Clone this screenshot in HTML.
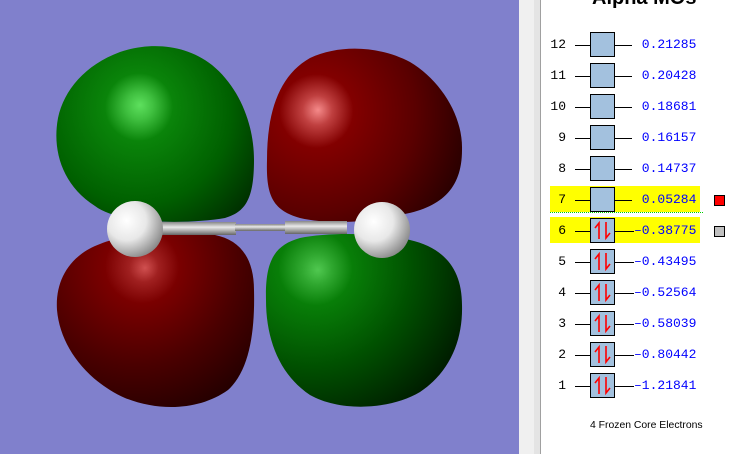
<!DOCTYPE html>
<html><head><style>
body{margin:0;width:756px;height:454px;overflow:hidden;background:#fff;position:relative;font-family:"Liberation Sans",sans-serif}
.ab{position:absolute}
.num{position:absolute;width:30px;text-align:right;font:13px "Liberation Mono",monospace;color:#000}
.val{position:absolute;left:634px;font:13px "Liberation Mono",monospace;color:#0000ff;white-space:pre}
.ln{position:absolute;height:1px;background:#000}
.box{position:absolute;left:590px;width:23px;height:23px;border:1px solid #000;background:#a3c1de}
</style></head><body>
<div class="ab" style="left:0;top:0;width:519px;height:454px;background:#8080cc"></div>
<div class="ab" style="left:519px;top:0;width:15px;height:454px;background:#f0f0f0"></div>
<div class="ab" style="left:534px;top:0;width:6px;height:454px;background:#e4e4e4;border-right:1px solid #a0a0a0"></div>
<svg class="ab" style="left:0;top:0" width="519" height="454" viewBox="0 0 519 454">
<defs>
<radialGradient id="g1" cx="135" cy="115" r="170" fx="140" fy="105" gradientUnits="userSpaceOnUse"><stop offset="0" stop-color="#5ee05e"/><stop offset="0.08" stop-color="#40c040"/><stop offset="0.2" stop-color="#0a840a"/><stop offset="0.55" stop-color="#006000"/><stop offset="1" stop-color="#001500"/></radialGradient>
<radialGradient id="r1" cx="310" cy="115" r="185" fx="318" fy="110" gradientUnits="userSpaceOnUse"><stop offset="0" stop-color="#f58a8a"/><stop offset="0.08" stop-color="#c04040"/><stop offset="0.2" stop-color="#820000"/><stop offset="0.55" stop-color="#5a0000"/><stop offset="1" stop-color="#150000"/></radialGradient>
<radialGradient id="r2" cx="130" cy="260" r="185" fx="145" fy="268" gradientUnits="userSpaceOnUse"><stop offset="0" stop-color="#d05050"/><stop offset="0.08" stop-color="#a02020"/><stop offset="0.2" stop-color="#7a0000"/><stop offset="0.55" stop-color="#4a0000"/><stop offset="1" stop-color="#150000"/></radialGradient>
<radialGradient id="g2" cx="305" cy="262" r="185" fx="318" fy="270" gradientUnits="userSpaceOnUse"><stop offset="0" stop-color="#50c850"/><stop offset="0.08" stop-color="#30a830"/><stop offset="0.2" stop-color="#087e08"/><stop offset="0.55" stop-color="#005000"/><stop offset="1" stop-color="#001500"/></radialGradient>
<radialGradient id="at" cx="0.35" cy="0.35" r="0.7"><stop offset="0" stop-color="#ffffff"/><stop offset="0.5" stop-color="#e8e8e8"/><stop offset="1" stop-color="#8a8a8a"/></radialGradient>
<linearGradient id="bd" x1="0" y1="0" x2="0" y2="1"><stop offset="0" stop-color="#888"/><stop offset="0.4" stop-color="#e8e8e8"/><stop offset="1" stop-color="#666"/></linearGradient>
</defs>
<path d="M95 206 C62 185,52 150,58 118 C64 90,85 65,120 52 C150 42,185 44,212 65 C240 88,254 125,254 160 C254 200,245 212,225 218 C190 224,120 225,95 206Z" fill="url(#g1)"/>
<path d="M300 218 C272 210,266 195,267 160 C267 110,280 75,310 58 C340 44,380 46,410 62 C440 80,463 115,462 150 C462 190,440 208,400 215 C370 222,330 225,300 218Z" fill="url(#r1)"/>
<path d="M100 244 C70 255,55 280,57 310 C60 345,85 380,125 398 C160 412,200 410,228 390 C250 370,255 330,254 290 C254 258,240 240,215 235 C180 230,130 232,100 244Z" fill="url(#r2)"/>
<path d="M300 238 C275 245,265 260,266 300 C266 340,280 375,310 395 C340 412,390 410,420 392 C450 372,463 340,462 305 C462 270,445 248,410 240 C380 233,330 232,300 238Z" fill="url(#g2)"/>
<rect x="160" y="222" width="76" height="13" fill="url(#bd)"/>
<rect x="235" y="224" width="52" height="7" fill="url(#bd)"/>
<rect x="285" y="221" width="62" height="13" fill="url(#bd)"/>
<circle cx="135" cy="229" r="28" fill="url(#at)"/>
<circle cx="382" cy="230" r="28" fill="url(#at)"/>
</svg>
<div class="ab" style="left:592px;top:-13px;font-weight:bold;font-size:20px;color:#000">Alpha MOs</div>
<div class="ab" style="left:550px;top:186px;width:150px;height:26px;background:#ffff00"></div>
<div class="ab" style="left:550px;top:217px;width:150px;height:26px;background:#ffff00"></div>
<div class="ab" style="left:550px;top:212px;width:153px;border-top:1px dotted #00d000"></div>
<div class="ab" style="left:714px;top:195px;width:9px;height:9px;background:#ff0000;border:1px solid #000"></div>
<div class="ab" style="left:714px;top:226px;width:9px;height:9px;background:#c0c0c0;border:1px solid #000"></div>
<div class="ab" style="left:590px;top:420px;font-size:10.4px;color:#000">4 Frozen Core Electrons</div>
<div id="rows"></div>
<script>
var vals=["0.21285","0.20428","0.18681","0.16157","0.14737","0.05284","-0.38775","-0.43495","-0.52564","-0.58039","-0.80442","-1.21841"];
var h="";
for(var i=0;i<12;i++){var n=12-i,y=45+31*i;
h+='<div class="num" style="left:536px;top:'+(y-8)+'px">'+n+'</div>';
h+='<div class="ln" style="left:575px;width:15px;top:'+y+'px"></div>';
var neg=vals[i][0]=="-";
h+='<div class="ln" style="left:615px;width:'+(neg?19:17)+'px;top:'+y+'px"></div>';
h+='<div class="box" style="top:'+(y-13)+'px">'+(n<=6?'<svg width="23" height="23"><path d="M8 20 V4 L4 9" stroke="#f00" stroke-width="1.6" fill="none"/><path d="M15 3 V19 L19 14" stroke="#f00" stroke-width="1.6" fill="none"/></svg>':'')+'</div>';
h+='<div class="val" style="top:'+(y-8)+'px">'+(neg?'\u2013'+vals[i].slice(1):' '+vals[i])+'</div>';}
document.getElementById("rows").innerHTML=h;
</script>
</body></html>
